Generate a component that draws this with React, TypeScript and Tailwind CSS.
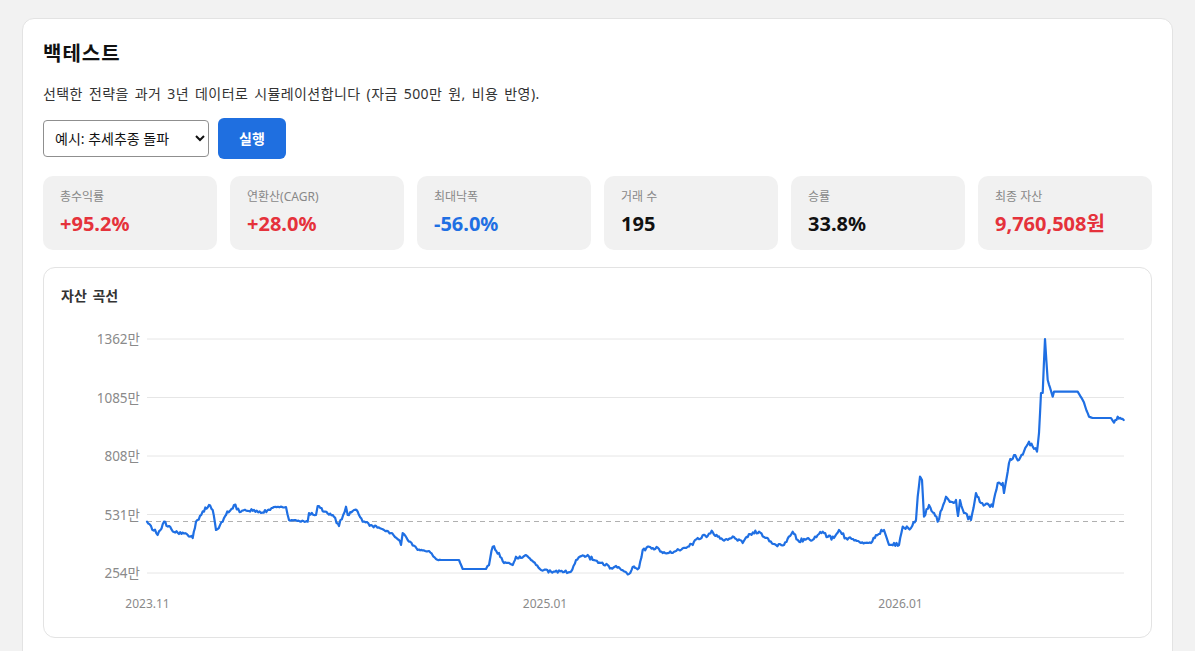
import { useMemo } from "react";

type Stat = { label: string; value: string; color: string };

const stats: Stat[] = [
  { label: "총수익률", value: "+95.2%", color: "text-[#e5323b]" },
  { label: "연환산(CAGR)", value: "+28.0%", color: "text-[#e5323b]" },
  { label: "최대낙폭", value: "-56.0%", color: "text-[#1f6fe3]" },
  { label: "거래 수", value: "195", color: "text-[#111]" },
  { label: "승률", value: "33.8%", color: "text-[#111]" },
  { label: "최종 자산", value: "9,760,508원", color: "text-[#e5323b]" },
];

// [x, y, jitter] in page pixels, read off the reference chart
const keys: [number, number, number][] = [
  [146, 521.7, 1.5], [150, 526, 2], [156.7, 535, 1.5], [163, 521.7, 1.5], [173, 532, 1],
  [186.7, 535, 1], [191.7, 538, 1], [195, 521.7, 1.5], [203, 511.7, 2], [208, 505, 1.5],
  [211.7, 510, 1.5], [215, 530, 1.5], [221.7, 521.7, 1.5], [225, 515, 1.5], [233, 505, 1.5],
  [240, 511.7, 1], [253, 510, 1], [260, 513, 1], [266.7, 510, 1], [273, 507, 0.5],
  [285, 507, 0.5], [288, 520, 0.5], [306.7, 521.7, 1], [308, 513, 1], [315, 515, 1],
  [316.7, 506, 1.5], [323, 511.7, 1], [331.7, 515, 1.5], [338, 526, 1.5], [345, 506.7, 1.5],
  [346.7, 515, 1], [353, 510, 1], [356.7, 511.7, 1], [361.7, 521.7, 1], [370, 525, 1],
  [383, 530, 1], [390, 533, 1.5], [398, 540, 1.5], [400, 545, 1], [401.7, 533, 1.5],
  [406.7, 540, 1], [416.7, 550, 0.5], [428, 551, 0.5], [435, 559, 0.5], [440, 560, 0],
  [458, 560, 0], [461.7, 569, 0], [485, 569, 1], [488, 565, 1.5], [491.7, 546.7, 1.5],
  [498, 553, 1.5], [503, 563, 1], [511.7, 565, 1], [515, 556.7, 1.5], [520, 558, 1],
  [525, 555, 1.5], [530, 560, 1], [540, 570, 1], [550, 571.7, 1], [570, 571.7, 1],
  [575, 560, 1.5], [586.7, 555, 1.5], [591.7, 560, 1], [600, 563, 1], [606.7, 565, 1.5],
  [610, 568, 1], [615, 566, 1], [628, 574, 1], [631.7, 567, 1.5], [638, 568, 1],
  [641.7, 550, 1.5], [648, 546.7, 1.5], [658, 549, 1], [661.7, 553, 1], [673, 551.7, 1],
  [686.7, 546.7, 1.5], [691.7, 545, 1.5], [696.7, 538, 1.5], [706.7, 536, 1], [710.7, 530.7, 1.5],
  [716.7, 536.7, 1], [723, 540.7, 1], [733, 537, 1], [741.7, 543, 1], [748, 534, 1.5],
  [758, 531.7, 1], [763, 537, 1], [775, 545, 1], [783, 545, 1], [791.7, 531.7, 1.5],
  [798, 541.7, 1.5], [803, 539, 1.5], [810, 540.7, 1], [816.7, 535, 1.5], [821.7, 531.7, 1.5],
  [826.7, 537, 1.5], [833, 538, 1.5], [838, 530, 1.5], [845, 538, 1.5], [852, 539, 1],
  [860, 543, 0.5], [870, 543, 1], [875, 535, 1.5], [883, 530, 1], [888, 545, 1.5],
  [898, 545, 1], [901.7, 526.7, 1.5], [910, 528, 1.5], [915, 520, 1.5], [916.7, 496.7, 1],
  [919, 476.7, 1], [921, 480, 1], [923, 516.7, 1.5], [928, 505, 1.5], [933, 513, 1.5],
  [936.7, 521.7, 1.5], [945, 496.7, 1.5], [950, 501.7, 1.5], [955, 500, 1], [957, 516, 1],
  [959, 500, 1], [963, 513, 1.5], [970, 520, 1.5], [975, 493, 1.5], [980, 503, 1.5],
  [991.7, 506.7, 1.5], [996.7, 483, 1.5], [1001.7, 483, 1], [1003, 493, 1], [1008, 463, 1.5],
  [1013, 455, 1.5], [1018, 460, 1.5], [1028, 441.7, 1.5], [1031.7, 446.7, 1.5], [1036, 451.7, 1],
  [1038, 433, 1], [1040, 393, 0.5], [1041.7, 393, 0.5], [1044, 339, 0.5], [1046.7, 380, 0.5],
  [1051.7, 396.7, 0.5], [1053, 391.7, 0], [1076.7, 391.7, 0], [1081.7, 400, 0.5], [1088, 416.7, 0],
  [1091.7, 418, 0], [1110, 418, 0], [1113, 422.7, 1], [1116.7, 416.7, 1], [1122.7, 420, 0],
];

function mulberry32(a: number) {
  return () => {
    a |= 0;
    a = (a + 0x6d2b79f5) | 0;
    let t = Math.imul(a ^ (a >>> 15), 1 | a);
    t = (t + Math.imul(t ^ (t >>> 7), 61 | t)) ^ t;
    return ((t ^ (t >>> 14)) >>> 0) / 4294967296;
  };
}

function buildPath() {
  const rand = mulberry32(42);
  const pts: string[] = [];
  for (let i = 0; i < keys.length - 1; i++) {
    const [x0, y0, amp] = keys[i];
    const [x1, y1] = keys[i + 1];
    const steps = Math.max(1, Math.round((x1 - x0) / 1.3));
    for (let s = 0; s < steps; s++) {
      const t = s / steps;
      const x = x0 + (x1 - x0) * t;
      const jitter = s === 0 ? 0 : (rand() * 2 - 1) * amp * 1.4;
      const y = y0 + (y1 - y0) * t + jitter;
      pts.push(`${x.toFixed(1)},${y.toFixed(1)}`);
    }
  }
  const last = keys[keys.length - 1];
  pts.push(`${last[0]},${last[1]}`);
  return "M" + pts.join(" L");
}

const yTicks = [
  { label: "1362만", y: 339 },
  { label: "1085만", y: 397.5 },
  { label: "808만", y: 456 },
  { label: "531만", y: 514.5 },
  { label: "254만", y: 573 },
];

const xTicks = [
  { label: "2023.11", x: 146.5 },
  { label: "2025.01", x: 544 },
  { label: "2026.01", x: 899.5 },
];

function EquityChart() {
  const d = useMemo(buildPath, []);
  return (
    <svg viewBox="60 310 1073 310" width={1073} height={310} className="block">
      {yTicks.map((t) => (
        <g key={t.label}>
          <line x1={146} x2={1123} y1={t.y} y2={t.y} stroke="#e6e6e6" strokeWidth={1} />
          <text x={139} y={t.y + 5} textAnchor="end" fontSize={13.5} fill="#8a8a8a">
            {t.label}
          </text>
        </g>
      ))}
      <line x1={146} x2={1123} y1={521.5} y2={521.5} stroke="#b0b0b0" strokeWidth={1} strokeDasharray="5 4" />
      <path d={d} fill="none" stroke="#1f6fe3" strokeWidth={2.2} strokeLinejoin="round" strokeLinecap="round" />
      {xTicks.map((t) => (
        <text key={t.label} x={t.x} y={607.5} textAnchor="middle" fontSize={12} fill="#8a8a8a">
          {t.label}
        </text>
      ))}
    </svg>
  );
}

export default function App() {
  return (
    <div
      className="min-h-screen bg-[#f2f2f2] px-[22px] pt-[18px] text-[#222]"
      style={{ fontFamily: '"Noto Sans", "Noto Sans CJK KR", sans-serif' }}
    >
      <div className="rounded-xl border border-[#e3e3e3] bg-white px-5 pt-5 pb-6">
        <h1 className="text-[20px] leading-[30px] font-bold tracking-[1px] text-[#111]">백테스트</h1>
        <p className="mt-[15px] text-[14px] leading-[20px] tracking-[0.4px] [word-spacing:2px] text-[#333]">
          선택한 전략을 과거 3년 데이터로 시뮬레이션합니다 (자금 500만 원, 비용 반영).
        </p>

        <div className="mt-[14px] flex items-center gap-[9px]">
          <select className="h-[37px] w-[166px] rounded-[4px] border border-[#8f8f8f] bg-white pl-[7px] pr-1 text-[14px] text-[#111]">
            <option>예시: 추세추종 돌파</option>
            <option>예시: 평균회귀</option>
          </select>
          <button className="h-[41px] w-[68px] rounded-md bg-[#1f6fe0] text-[14px] font-bold text-white">
            실행
          </button>
        </div>

        <div className="mt-[17px] grid grid-cols-6 gap-[13px]">
          {stats.map((s) => (
            <div key={s.label} className="h-[74px] rounded-[10px] bg-[#f1f1f1] px-[17px] pt-[13px]">
              <div className="text-[12px] leading-[16px] text-[#888]">{s.label}</div>
              <div className={`mt-[6px] text-[20px] leading-[26px] font-bold ${s.color}`}>{s.value}</div>
            </div>
          ))}
        </div>

        <div className="mt-[17px] rounded-xl border border-[#e3e3e3] px-[17px] pt-[18px] pb-[17px]">
          <h2 className="text-[14px] leading-[20px] font-bold [word-spacing:2px] text-[#333]">자산 곡선</h2>
          <div className="mt-[4px]">
            <EquityChart />
          </div>
        </div>
      </div>
    </div>
  );
}
